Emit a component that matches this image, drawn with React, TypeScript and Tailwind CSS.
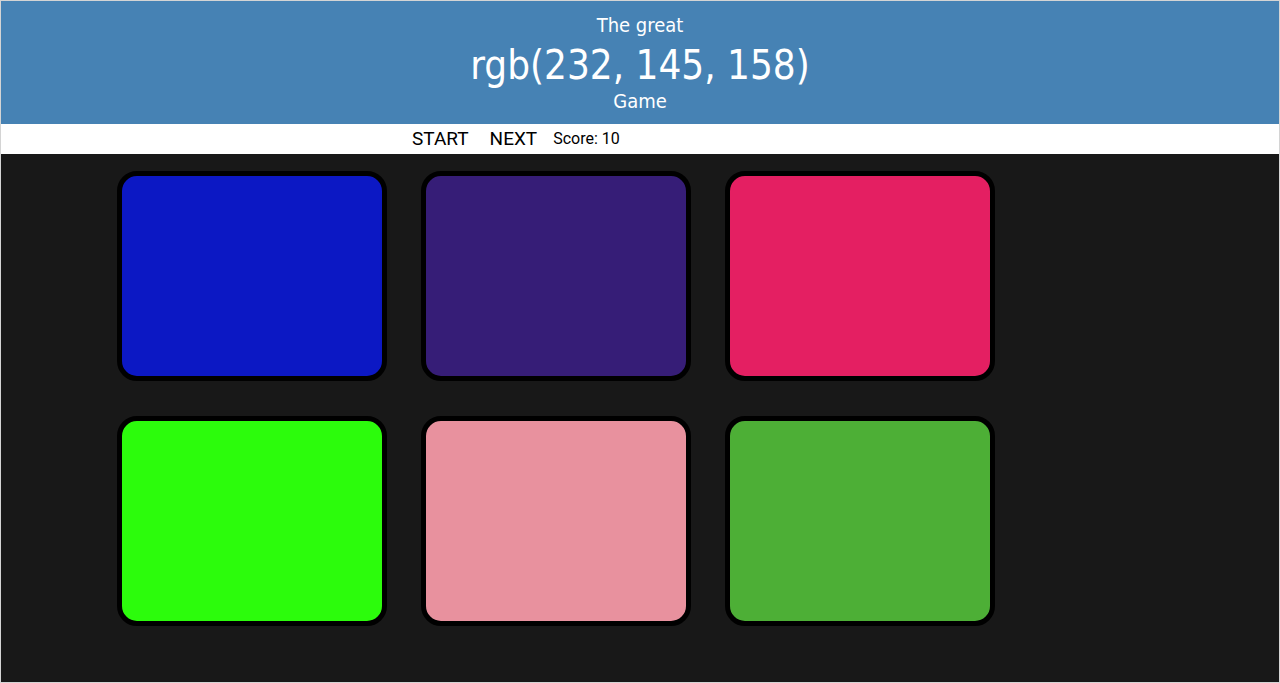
import React from "react";

const colors = [
  "#0c18c4",
  "#361d77",
  "#e41f62",
  "#2cfc0c",
  "#e8919e",
  "#4daf36",
];

const headFont = { fontFamily: '"DejaVu Sans Condensed", "Liberation Sans", sans-serif' };

export default function App() {
  return (
    <div className="h-[683px] w-[1280px] flex flex-col border border-[#d4d4d4] bg-[#181818] overflow-hidden">
      <header
        className="bg-[#4682b4] text-white text-center pt-[12px] pb-[10px] h-[123px]"
        style={headFont}
      >
        <div className="text-[20px] leading-[24px]">The great</div>
        <div className="text-[40px] leading-[48px] mt-1">rgb(232, 145, 158)</div>
        <div className="text-[20px] leading-[24px]">Game</div>
      </header>
      <nav className="bg-white h-[30px] flex items-center pl-[411px] font-['Roboto',sans-serif] text-black">
        <button className="text-[19px] mr-[21px]">START</button>
        <button className="text-[19px] mr-[16px]">NEXT</button>
        <span className="text-[16px]">Score: 10</span>
      </nav>
      <main className="flex-1 pt-[17px] pl-[116px]">
        <div className="grid grid-cols-[repeat(3,270px)] gap-x-[34px] gap-y-[35px]">
          {colors.map((c) => (
            <div
              key={c}
              className="h-[210px] rounded-[20px] border-[5px] border-black"
              style={{ backgroundColor: c }}
            />
          ))}
        </div>
      </main>
    </div>
  );
}
